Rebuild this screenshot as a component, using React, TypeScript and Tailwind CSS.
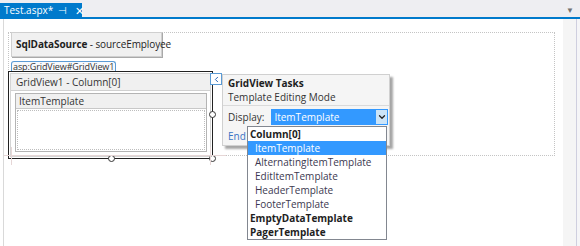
import { ChevronDown, ChevronLeft } from "lucide-react";

/* ── Smart-tag dropdown entries ─────────────────────────────────────── */
const TEMPLATES: { label: string; bold?: boolean; selected?: boolean }[] = [
	{ label: "Column[0]", bold: true },
	{ label: "ItemTemplate", selected: true },
	{ label: "AlternatingItemTemplate" },
	{ label: "EditItemTemplate" },
	{ label: "HeaderTemplate" },
	{ label: "FooterTemplate" },
	{ label: "EmptyDataTemplate", bold: true },
	{ label: "PagerTemplate", bold: true },
];

function Handle({ className }: { className: string }) {
	return <div className={`absolute w-[7px] h-[7px] rounded-full border border-[#333] bg-white ${className}`} />;
}

export default function App() {
	return (
		<div className="relative w-[580px] h-[246px] overflow-hidden bg-white flex flex-col font-['Segoe_UI','Open_Sans',sans-serif] text-[10px] text-[#1e1e1e]">
			{/* Document tab strip */}
			<div className="h-[17px] bg-[#eeeef2] flex items-end justify-between">
				<div className="h-[14px] w-[82px] bg-[#007acc] text-white flex items-center pl-[4px] gap-[5px] leading-none">
					<span>Test.aspx*</span>
					<span className="text-[10px]">⊣</span>
					<span className="text-[11px] ml-[3px]">✕</span>
				</div>
				<span className="mr-[6px] mb-[3px] text-[#717171] text-[8px] leading-none">▼</span>
			</div>
			<div className="h-[2px] bg-[#007acc]" />

			{/* Editor area */}
			<div className="flex-1 flex">
				<div className="w-[4px] border-r border-[#d9d9d9]" />
				<div className="relative flex-1">
					{/* design surface */}
					<div className="ml-[4px] mt-[13px] w-[547px] h-[124px] border border-dotted border-[#c4c4c4] pl-[2px]">
						<div className="-mt-[1px] w-[151px] h-[25px] bg-[#f0f0f0] border border-[#cfcfcf] shadow-[1px_1px_0_#a9a9a9] flex items-center px-[4px] whitespace-nowrap tracking-[-0.1px]">
							<span className="font-bold">SqlDataSource</span>
							<span>&nbsp;- sourceEmployee</span>
						</div>
						<div className="mt-[4px] w-fit h-[10px] rounded-t-[3px] border border-b-0 border-[#5b9bd5] bg-[#f7f9fc] text-[9px] leading-[9px] px-[1px] text-[#333] whitespace-nowrap tracking-[-0.1px]">
							asp:GridView#GridView1
						</div>
						<div className="relative -ml-[3px] w-[205px] h-[88px] border border-[#222] pt-[1px] pl-[1px] pr-[1px]">
							<div className="h-[84px] border border-[#d4d4d4]">
								<div className="h-[17px] bg-[#f0f0f0] border-b border-[#d0d0d0] flex items-center pl-[5px] text-[10px] text-[#333]">
									GridView1 - Column[0]
								</div>
								<div className="pl-[4px] pr-[3px] pt-[2px]">
									<div className="border border-[#b4b4b4]">
										<div className="h-[15px] bg-[#f0f0f0] border-b border-[#c8c8c8] flex items-center pl-[3px] text-[#333]">
											ItemTemplate
										</div>
										<div className="h-[40px] m-[1px] border border-dotted border-[#bdbdbd]" />
									</div>
								</div>
							</div>

							<Handle className="-right-[4px] top-[39px]" />
							<Handle className="left-[99px] -bottom-[4px]" />
							<Handle className="-right-[4px] -bottom-[4px]" />

							{/* smart tag glyph */}
							<div className="absolute left-[201px] top-[1px] w-[12px] h-[12px] bg-white border border-[#5b9bd5] flex items-center justify-center">
								<ChevronLeft size={9} strokeWidth={2.5} className="text-[#1e5fb4]" />
							</div>
						</div>
					</div>

					{/* selection guides */}
					<div className="absolute left-0 top-[136px] w-[222px] h-px bg-[#e6d6d6]" />
					<div className="absolute left-[7px] top-[128px] w-px h-[18px] bg-[#e6d6d6]" />
					<div className="absolute left-[206px] top-[128px] w-px h-[18px] bg-[#e6d6d6]" />
				</div>
				<div className="w-[13px] bg-[#f5f5f5]" />
				<div className="w-px bg-[#cfcfdf]" />
				<div className="w-[3px] bg-[#f5f5f7]" />
			</div>

			{/* GridView Tasks panel */}
			<div className="absolute left-[222px] top-[74px] w-[168px] h-[72px] bg-[#f5f5f5] border border-[#d0d0d0] shadow-[3px_3px_2px_rgba(0,0,0,0.35)]">
				<div className="px-[5px] pt-[2px]">
					<div className="font-bold h-[13px] leading-[13px]">GridView Tasks</div>
					<div className="h-[14px] leading-[14px] text-[#333]">Template Editing Mode</div>
				</div>
				<div className="h-px bg-[#dadada] mt-[1px]" />
				<div className="flex items-center pl-[5px] mt-[3px] gap-[7px]">
					<span className="text-[#333]">Display:</span>
					<div className="w-[117px] h-[16px] border border-[#3399ff] bg-[#3399ff] flex">
						<span className="flex-1 text-white leading-[14px] pl-[2px]">ItemTemplate</span>
						<div className="w-[12px] bg-[#cce4f7] border-l border-[#3399ff] flex items-center justify-center">
							<ChevronDown size={10} strokeWidth={3} className="text-[#222]" />
						</div>
					</div>
				</div>
				{/* the open list covers the rest of this link */}
				<div className="ml-[5px] mt-[4px] w-[19px] overflow-hidden whitespace-nowrap text-[#3a74c4]">End Template Editing</div>
			</div>

			{/* dropdown list */}
			<div className="absolute left-[247px] top-[126px] w-[140px] bg-white border border-[#828790]">
				{TEMPLATES.map((t) => (
					<div
						key={t.label}
						className={`h-[14px] leading-[14px] ${
							t.selected ? "bg-[#3399ff] text-white" : t.bold ? "text-[#1e1e1e]" : "text-[#3c3850]"
						} ${t.bold ? "font-bold pl-[2px]" : "pl-[7px]"}`}
					>
						{t.label}
					</div>
				))}
			</div>
		</div>
	);
}
